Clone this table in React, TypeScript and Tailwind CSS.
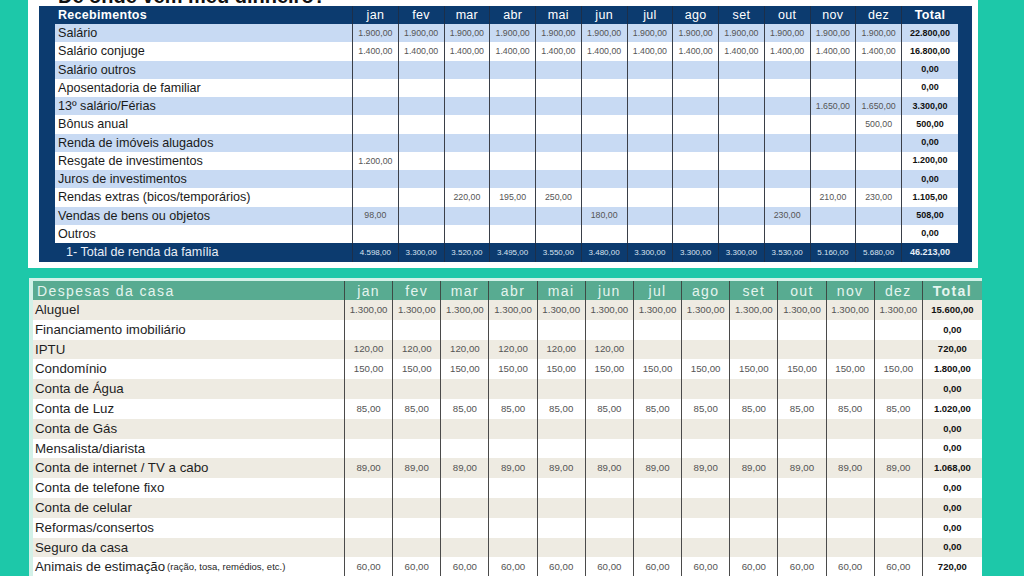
import React from "react";

const months = ["jan", "fev", "mar", "abr", "mai", "jun", "jul", "ago", "set", "out", "nov", "dez"];

const rep = (v: string) => Array(12).fill(v);
const blank = () => Array(12).fill("");

type Row = { label: React.ReactNode; values: string[]; total: string };

const incomeRows: Row[] = [
  { label: "Salário", values: rep("1.900,00"), total: "22.800,00" },
  { label: "Salário conjuge", values: rep("1.400,00"), total: "16.800,00" },
  { label: "Salário outros", values: blank(), total: "0,00" },
  { label: "Aposentadoria de familiar", values: blank(), total: "0,00" },
  { label: "13º salário/Férias", values: ["", "", "", "", "", "", "", "", "", "", "1.650,00", "1.650,00"], total: "3.300,00" },
  { label: "Bônus anual", values: ["", "", "", "", "", "", "", "", "", "", "", "500,00"], total: "500,00" },
  { label: "Renda de imóveis alugados", values: blank(), total: "0,00" },
  { label: "Resgate de investimentos", values: ["1.200,00", "", "", "", "", "", "", "", "", "", "", ""], total: "1.200,00" },
  { label: "Juros de investimentos", values: blank(), total: "0,00" },
  { label: "Rendas extras (bicos/temporários)", values: ["", "", "220,00", "195,00", "250,00", "", "", "", "", "", "210,00", "230,00"], total: "1.105,00" },
  { label: "Vendas de bens ou objetos", values: ["98,00", "", "", "", "", "180,00", "", "", "", "230,00", "", ""], total: "508,00" },
  { label: "Outros", values: blank(), total: "0,00" },
];

const incomeTotals = ["4.598,00", "3.300,00", "3.520,00", "3.495,00", "3.550,00", "3.480,00", "3.300,00", "3.300,00", "3.300,00", "3.530,00", "5.160,00", "5.680,00"];

const expenseRows: Row[] = [
  { label: "Aluguel", values: rep("1.300,00"), total: "15.600,00" },
  { label: "Financiamento imobiliário", values: blank(), total: "0,00" },
  { label: "IPTU", values: ["120,00", "120,00", "120,00", "120,00", "120,00", "120,00", "", "", "", "", "", ""], total: "720,00" },
  { label: "Condomínio", values: rep("150,00"), total: "1.800,00" },
  { label: "Conta de Água", values: blank(), total: "0,00" },
  { label: "Conta de Luz", values: rep("85,00"), total: "1.020,00" },
  { label: "Conta de Gás", values: blank(), total: "0,00" },
  { label: "Mensalista/diarista", values: blank(), total: "0,00" },
  { label: "Conta de internet / TV a cabo", values: rep("89,00"), total: "1.068,00" },
  { label: "Conta de telefone fixo", values: blank(), total: "0,00" },
  { label: "Conta de celular", values: blank(), total: "0,00" },
  { label: "Reformas/consertos", values: blank(), total: "0,00" },
  { label: "Seguro da casa", values: blank(), total: "0,00" },
  {
    label: (
      <>
        Animais de estimação{" "}
        <span className="text-[9.5px] ml-[2px]">(ração, tosa, remédios, etc.)</span>
      </>
    ),
    values: rep("60,00"),
    total: "720,00",
  },
];

const IncomeTable: React.FC = () => (
  <div className="bg-[#0c3b6f] pl-[16px] pr-[14px]">
    <div className="grid grid-cols-[297px_repeat(12,45.75px)_57px] h-[18px] text-white text-[12.5px] tracking-[0.3px]">
      <div className="flex items-center pl-[3px] font-bold">Recebimentos</div>
      {months.map((m) => (
        <div key={m} className="flex items-center justify-center border-l border-[#1c2f4a]">
          {m}
        </div>
      ))}
      <div className="flex items-center justify-center border-l border-[#1c2f4a] font-bold">Total</div>
    </div>

    {incomeRows.map((r, i) => (
      <div
        key={i}
        className={`grid grid-cols-[297px_repeat(12,45.75px)_57px] h-[18.25px] ${i % 2 === 0 ? "bg-[#c8daf3]" : "bg-white"}`}
      >
        <div className="flex items-center pl-[3px] text-[12.6px] text-[#1a1a1a] whitespace-nowrap">{r.label}</div>
        {r.values.map((v, j) => (
          <div key={j} className="flex items-center justify-center border-l border-[#3a3f48] text-[8.8px] text-[#555]">
            {v}
          </div>
        ))}
        <div className="flex items-center justify-center border-l border-[#3a3f48] text-[9px] font-bold text-[#111]">
          {r.total}
        </div>
      </div>
    ))}

    <div className="grid grid-cols-[297px_repeat(12,45.75px)_57px] h-[19px] text-white">
      <div className="flex items-center pl-[11px] text-[12.6px] text-[#e8eef7]">1- Total de renda da família</div>
      {incomeTotals.map((v, j) => (
        <div key={j} className="flex items-center justify-center border-l border-[#1c2f4a] text-[8px] text-[#d8e2ef]">
          {v}
        </div>
      ))}
      <div className="flex items-center justify-center border-l border-[#1c2f4a] text-[9px] font-bold text-[#e8eef7]">
        46.213,00
      </div>
    </div>
  </div>
);

const ExpenseTable: React.FC = () => (
  <div className="ml-[29px] w-[953px] border-t-[3px] border-l-[4px] border-[#d2f1e8]">
    <div className="grid grid-cols-[311px_repeat(12,48.17px)_60px] h-[19px] bg-[#58ab91] text-[14px] text-[#e4f4ee] tracking-[1.4px]">
      <div className="flex items-center pl-[4px] whitespace-nowrap">Despesas da casa</div>
      {months.map((m) => (
        <div key={m} className="flex items-center justify-center border-l border-[#3d4a45]">
          {m}
        </div>
      ))}
      <div className="flex items-center justify-center border-l border-[#3d4a45] font-bold">Total</div>
    </div>

    {expenseRows.map((r, i) => (
      <div
        key={i}
        className={`grid grid-cols-[311px_repeat(12,48.17px)_60px] h-[19.8px] ${i % 2 === 0 ? "bg-[#eeebe2]" : "bg-white"}`}
      >
        <div className="flex items-center pl-[2px] text-[13.3px] text-[#1e1e1e] whitespace-nowrap">{r.label}</div>
        {r.values.map((v, j) => (
          <div key={j} className="flex items-center justify-center border-l border-[#4a4a4a] text-[9.7px] text-[#555]">
            {v}
          </div>
        ))}
        <div className="flex items-center justify-center border-l border-[#4a4a4a] text-[9.5px] font-bold text-[#111]">
          {r.total}
        </div>
      </div>
    ))}
  </div>
);

export default function App() {
  return (
    <div className="w-[1024px] h-[576px] overflow-hidden bg-[#1dc8a9] font-['Liberation_Sans',Arial,sans-serif]">
      <div className="ml-[28px] w-[950px] bg-white pl-[11px] pr-[6px] pb-[6px]">
        <div className="-mt-[14px] h-[20px] pl-[19px] text-[20px] leading-[20px] font-bold text-[#111] whitespace-nowrap">
          De onde vem meu dinheiro?
        </div>
        <IncomeTable />
      </div>
      <div className="mt-[10px]">
        <ExpenseTable />
      </div>
    </div>
  );
}
